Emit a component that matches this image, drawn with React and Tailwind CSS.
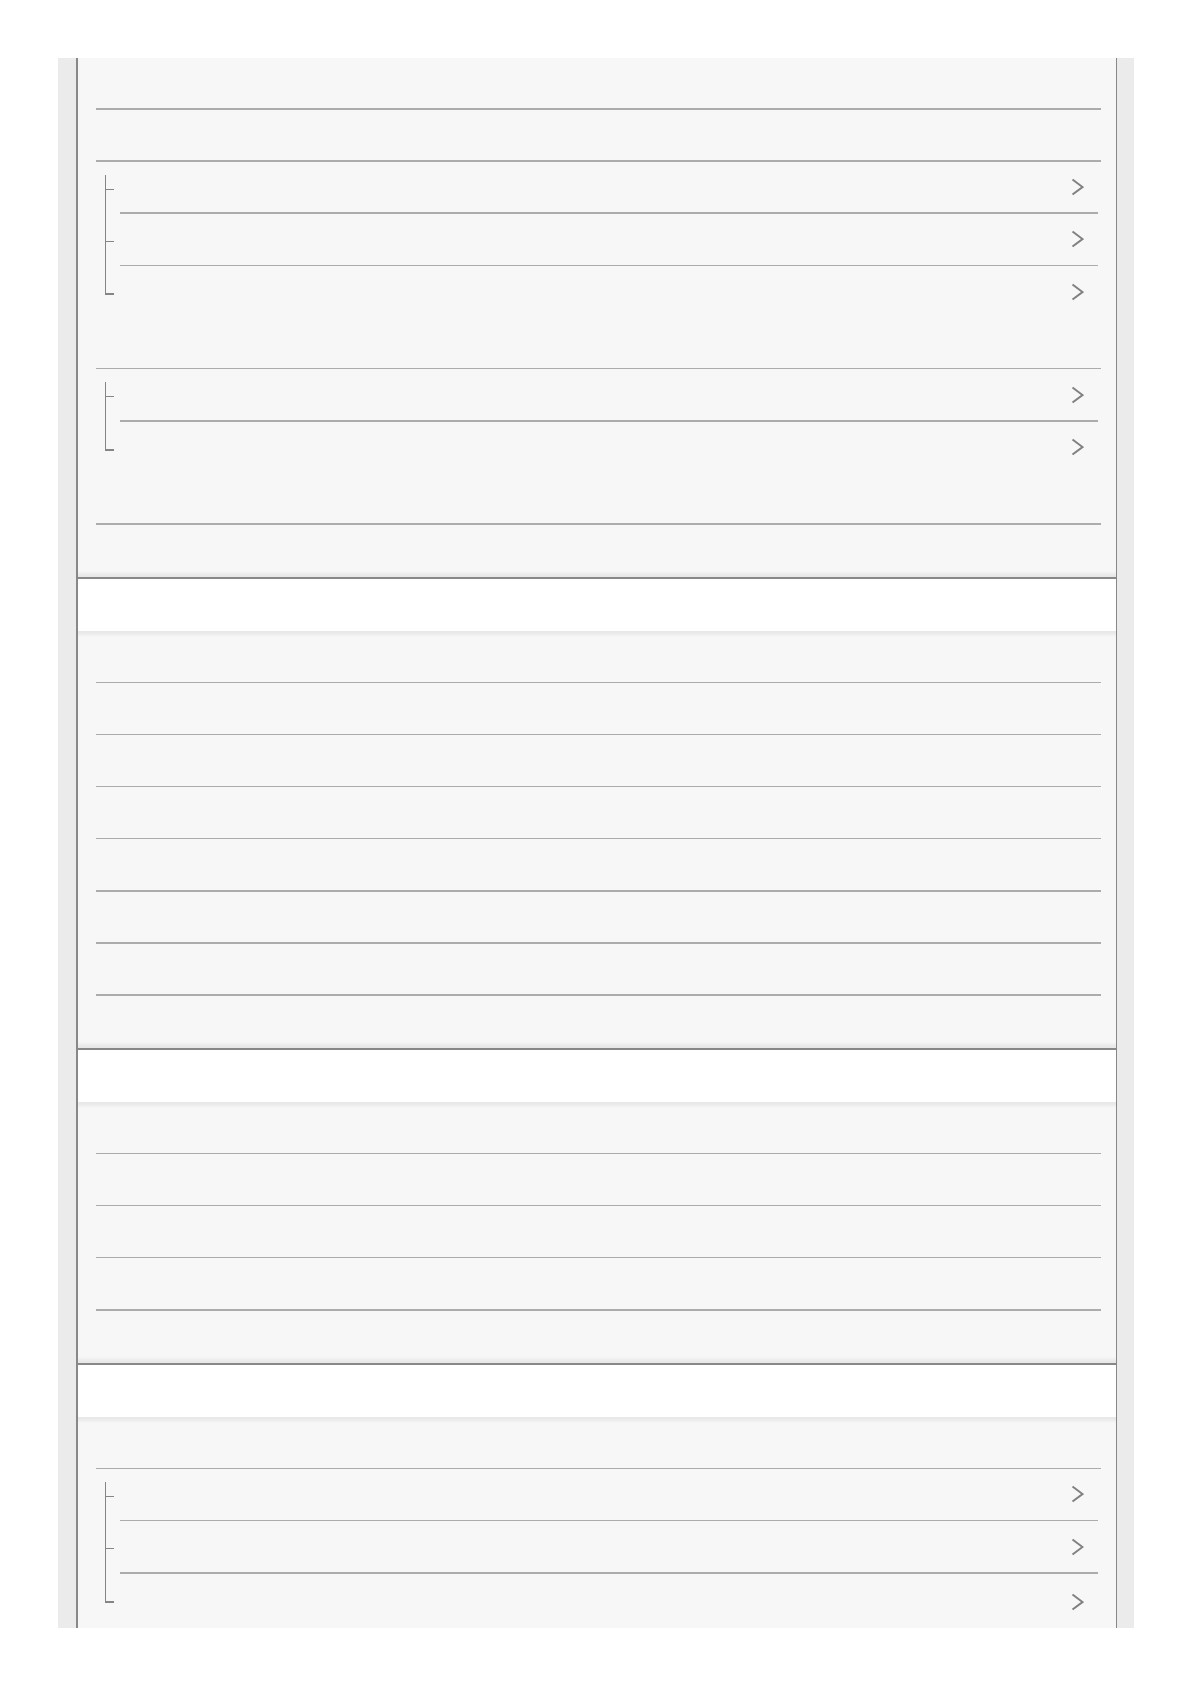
import React from 'react';

const chevron = (
  <svg width="13" height="18" viewBox="0 0 13 18" fill="none" className="shrink-0">
    <polyline points="1.5,1.5 11.5,9 1.5,16.5" stroke="#808080" strokeWidth="2" />
  </svg>
);

const line = 'h-[1.5px] bg-[#acacac]';

// plain list row, line under it
function Row({ h = 'h-[52.2px]', last }) {
  return (
    <div className={`${h} flex flex-col`}>
      <div className="flex-1" />
      {!last && <div className={line} />}
    </div>
  );
}

// one branch of the tree bracket + the link row
function SubRow({ first, last, h }) {
  return (
    <div className={`flex ${h || (last ? 'h-[51px]' : 'h-[52.2px]')}`}>
      <div className="w-[24px] shrink-0 pl-[9px]">
        <div className="flex h-full flex-col">
          <div className={`${first ? 'mt-[13px] h-[14px]' : 'h-[27px]'} border-l border-[#858585]`} />
          <div className={`${last ? 'h-[2px]' : 'h-px'} w-[9px] bg-[#858585]`} />
          <div className={`flex-1 ${last ? '' : 'border-l border-[#858585]'}`} />
        </div>
      </div>
      <div className="mr-[3px] flex flex-1 flex-col">
        <div className="flex flex-1 items-center justify-end pr-[14px]">{chevron}</div>
        {!last && <div className={line} />}
      </div>
    </div>
  );
}

function SubList({ count, lastH }) {
  return (
    <div>
      {Array.from({ length: count }).map((_, i) => (
        <SubRow
          key={i}
          first={i === 0}
          last={i === count - 1}
          h={i === count - 1 && lastH ? lastH : undefined}
        />
      ))}
    </div>
  );
}

function Header() {
  return (
    <div className="relative z-10 h-[54px] border-t-2 border-[#888] bg-white shadow-[0_0_3px_4px_rgba(0,0,0,0.06)]" />
  );
}

function Section({ children }) {
  return <div className="bg-[#f7f7f7] pl-[18px] pr-[15px]">{children}</div>;
}

export default function App() {
  return (
    <div className="min-h-[1685px] bg-white pt-[58px]">
      <div className="ml-[58px] w-[1076px] bg-[#ebebeb] pl-[18px] pr-[17px]">
        <div className="h-[1570px] overflow-hidden border-l-2 border-r border-[#888] bg-[#f7f7f7]">
          <Section>
            <Row h="h-[51.6px]" />
            <Row />
            <SubList count={3} />
            <Row />
            <SubList count={2} />
            <Row />
            <Row last />
          </Section>

          <Header />
          <Section>
            {Array.from({ length: 8 }).map((_, i) => (
              <Row key={i} h="h-[52.125px]" last={i === 7} />
            ))}
          </Section>

          <Header />
          <Section>
            {Array.from({ length: 5 }).map((_, i) => (
              <Row key={i} last={i === 4} />
            ))}
          </Section>

          <Header />
          <Section>
            <Row h="h-[52.3px]" />
            <SubList count={3} lastH="h-[56px]" />
          </Section>
        </div>
      </div>
    </div>
  );
}
